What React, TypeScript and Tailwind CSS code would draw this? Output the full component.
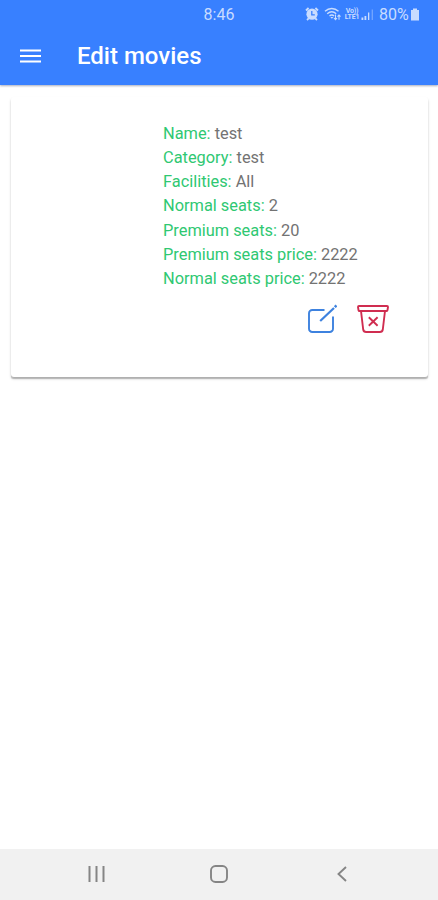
import React from "react";

const details = [
  { label: "Name:", value: "test" },
  { label: "Category:", value: "test" },
  { label: "Facilities:", value: "All" },
  { label: "Normal seats:", value: "2" },
  { label: "Premium seats:", value: "20" },
  { label: "Premium seats price:", value: "2222" },
  { label: "Normal seats price:", value: "2222" },
];

const StatusBar = () => {
  return (
    <div className="grid h-7 grid-cols-[1fr_32px_1fr] items-center text-[16px] leading-7 text-[#c9dcff]">
      <span />
      <span className="pt-px text-center leading-[27px]">8:46</span>
      <div className="flex items-center justify-end pr-[18px]">
        {/* alarm */}
        <svg className="mr-[5px] h-[14px] w-[14px]" viewBox="0 0 14 14" fill="none">
          <circle cx="7" cy="7.2" r="5.6" fill="currentColor" />
          <path d="M6.8 4v3.800h3" stroke="#3880ff" strokeWidth="1.300" />
          <path d="M1 3.500 3.600 1M13 3.500 10.400 1M2 13l1.700-1.600M12 13l-1.700-1.600" stroke="currentColor" strokeWidth="1.800" />
        </svg>
        {/* wifi with arrows */}
        <svg className="mr-[2px] h-[14px] w-[18px]" viewBox="0 0 18 14" fill="none" stroke="currentColor">
          <path d="M1 4.200c4-3.600 9.500-3.600 13.500 0M3.200 6.700c3-2.500 6.200-2.500 9 0M5.500 9c1.600-1.200 3.200-1.200 4.600 0" strokeWidth="1.400" />
          <path d="m6.300 10 1.600 1.800L9.500 10z" fill="currentColor" stroke="none" />
          <path d="M11.500 7.500v5.200M10 11l1.500 1.700L13 11M15 12.700V8M13.500 9.700 15 8l1.500 1.700" strokeWidth="1.100" />
        </svg>
        <span className="mr-px flex w-[16px] flex-col items-center text-[7px] leading-[6.500px] font-bold tracking-[-0.200px]">
          <span>Vo))</span>
          <span>LTE1</span>
        </span>
        <svg className="mr-[5px] h-[13px] w-[13px]" viewBox="0 0 13 13" fill="currentColor">
          <path d="M.5 9.500h1.800V12H.5zM3.500 8h1.800v4H3.500zM7 4.500h1.300V12H7z" />
          <path d="M10.700 1.500h1.100V12h-1.100z" opacity=".5" />
        </svg>
        <span className="w-[31px] pt-px leading-[27px]">80%</span>
        <svg className="h-[13px] w-[10px]" viewBox="0 0 10 13" fill="currentColor">
          <path d="M3 .5h4V2h2v10.500H1V2h2z" />
        </svg>
      </div>
    </div>
  );
};

const App = () => {
  return (
    <div className="flex h-[900px] w-[438px] flex-col overflow-hidden bg-white font-['Roboto',sans-serif]">
      <header className="z-10 h-[85px] shrink-0 bg-[#3880ff] shadow-[0_1px_2px_rgba(40,50,90,0.4)]">
        <StatusBar />
        <div className="flex h-14 items-center pl-[20px]">
          <button aria-label="Menu" className="text-white">
            <svg className="h-[14px] w-[21px]" viewBox="0 0 21 14" stroke="currentColor" strokeWidth="1.800">
              <path d="M0 1.500h21M0 7h21M0 12.500h21" />
            </svg>
          </button>
          <h1 className="pl-[36px] text-[24px] font-medium text-white">
            Edit movies
          </h1>
        </div>
      </header>

      <main className="flex-1 pt-[12px] pr-[10px] pl-[11px]">
        <div className="h-[280px] rounded-[3px] bg-white pt-[24.500px] pl-[152px] shadow-[0_2px_1px_-0.500px_rgba(0,0,0,0.200),0_2px_3px_0_rgba(0,0,0,0.160)]">
          {details.map((item) => (
            <p key={item.label} className="text-[16.380px] leading-[24.330px] text-[#737373]">
              <span className="text-[#2fc872]">{item.label}</span> {item.value}
            </p>
          ))}
          <div className="flex items-start gap-[20px] pt-[12.500px] pl-[145px]">
            <button aria-label="Edit" className="text-[#3d82df]">
              <svg className="h-[30px] w-[29px]" viewBox="0 0 29 30" fill="none" stroke="currentColor" strokeWidth="1.900">
                <path d="M16.500 6H4.300A3.300 3.300 0 0 0 1 9.300v15.400A3.300 3.300 0 0 0 4.300 28h17.400a3.300 3.300 0 0 0 3.300-3.300V12.500" />
                <path d="M12.200 17 26 4" strokeWidth="2.200" />
                <path d="m26.800 3.200 1.700-1.700" strokeWidth="2.600" />
              </svg>
            </button>
            <button aria-label="Delete" className="text-[#d02d50]">
              <svg className="h-[30px] w-[32px]" viewBox="0 0 32 30" fill="none" stroke="currentColor" strokeWidth="1.900" strokeLinejoin="round">
                <path d="M2 2h28a1 1 0 0 1 1 1l-.5 3a1 1 0 0 1-1 1h-27a1 1 0 0 1-1-1L1 3a1 1 0 0 1 1-1z" />
                <path d="m4 7 2.200 18.500A3 3 0 0 0 9.200 28h13.600a3 3 0 0 0 3-2.500L28 7" />
                <path d="m11.800 13.300 8.800 8.400M20.600 13.300l-8.800 8.400" />
              </svg>
            </button>
          </div>
        </div>
      </main>

      <nav className="grid h-[51px] shrink-0 grid-cols-3 items-center bg-[#f1f1f1] px-[35px] pb-[2px] text-[#858585]">
        <button aria-label="Recent apps" className="flex justify-center">
          <svg className="h-[16px] w-[17px]" viewBox="0 0 17 16" stroke="currentColor" strokeWidth="2">
            <path d="M1.500 0v16M8.500 0v16M15.500 0v16" />
          </svg>
        </button>
        <button aria-label="Home" className="flex justify-center">
          <svg className="h-[18px] w-[18px]" viewBox="0 0 18 18" fill="none" stroke="currentColor" strokeWidth="1.900">
            <rect x="1" y="1" width="16" height="16" rx="4.500" />
          </svg>
        </button>
        <button aria-label="Back" className="flex justify-center">
          <svg className="h-[16px] w-[10px]" viewBox="0 0 10 16" fill="none" stroke="currentColor" strokeWidth="1.900">
            <path d="M9 1 1.500 8 9 15" />
          </svg>
        </button>
      </nav>
    </div>
  );
};

export default App;
